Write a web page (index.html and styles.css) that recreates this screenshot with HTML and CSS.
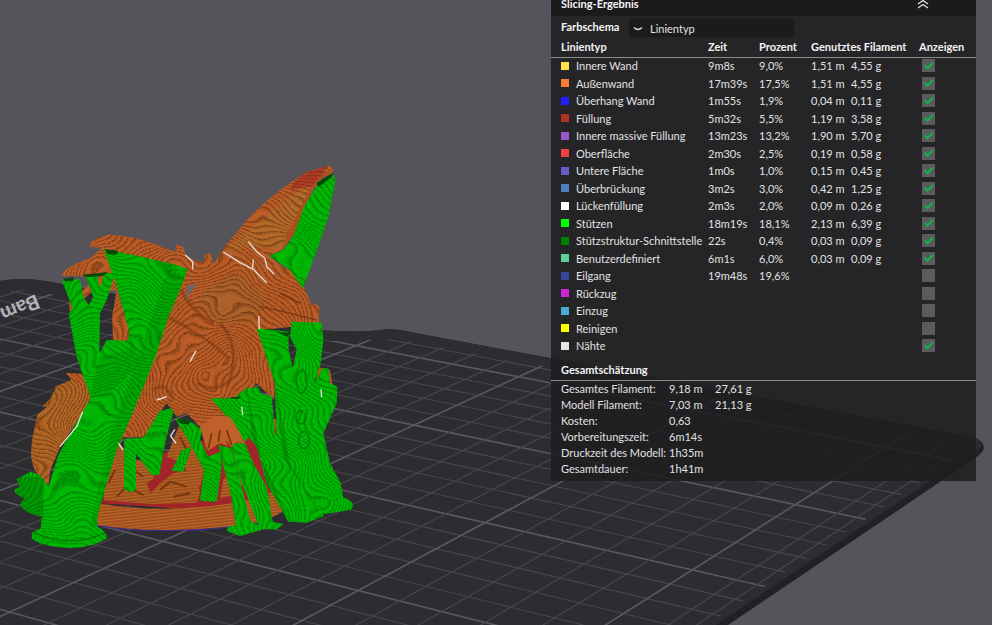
FILE: index.html
```
<!DOCTYPE html>
<html lang="de">
<head>
    <meta charset="UTF-8">
    <meta name="viewport" content="width=device-width, initial-scale=1.0">
    <title>Slicing-Ergebnis</title>
    <link rel="stylesheet" href="styles.css">
</head>
<body>
    <svg class="scene" viewBox="0 0 992 625" preserveAspectRatio="xMinYMin slice" aria-hidden="true">
        <defs>
            <!-- layer line textures -->
            <radialGradient id="rings-orange" gradientUnits="userSpaceOnUse" cx="640" cy="670" r="15" spreadMethod="repeat">
                <stop offset="0" stop-color="#5e2a08" stop-opacity="0"/>
                <stop offset=".5" stop-color="#5e2a08" stop-opacity=".15"/>
                <stop offset=".8" stop-color="#5e2a08" stop-opacity=".65"/>
                <stop offset="1" stop-color="#5e2a08" stop-opacity="0"/>
            </radialGradient>
            <linearGradient id="lines-orange" gradientUnits="userSpaceOnUse" x1="0" y1="0" x2="1" y2="9" spreadMethod="repeat">
                <stop offset="0" stop-color="#6d330c" stop-opacity="0"/>
                <stop offset=".6" stop-color="#6d330c" stop-opacity=".5"/>
                <stop offset="1" stop-color="#6d330c" stop-opacity="0"/>
            </linearGradient>
            <radialGradient id="rings-green" gradientUnits="userSpaceOnUse" cx="230" cy="1250" r="15" spreadMethod="repeat">
                <stop offset="0" stop-color="#005a00" stop-opacity="0"/>
                <stop offset=".5" stop-color="#005a00" stop-opacity=".1"/>
                <stop offset=".8" stop-color="#005a00" stop-opacity=".55"/>
                <stop offset="1" stop-color="#005a00" stop-opacity="0"/>
            </radialGradient>
            <filter id="warp" x="0" y="0" width="1" height="1" color-interpolation-filters="sRGB">
                <feTurbulence type="fractalNoise" baseFrequency=".009" numOctaves="1" seed="4" result="n"/>
                <feDisplacementMap in="SourceGraphic" in2="n" scale="190" xChannelSelector="R" yChannelSelector="G"/>
            </filter>
            <clipPath id="plate-clip">
                <path d="M0 293 L20 289 L330 341 L400 339 L970 446 L966 452 L716 619 L700 625 L0 625Z"/>
            </clipPath>
            <clipPath id="dragon-clip">
                <use href="#dragon"/>
            </clipPath>
            <clipPath id="support-clip">
                <use href="#supports"/>
            </clipPath>
            <path id="stones" d="M310 1050 315 980 335 920 350 860 372 900 375 930 420 930 450 955 462 985 440 1000 452 1030 480 1000 520 970 555 962 590 985 600 1030 590 1058 450 1062Z M500 920 540 820 600 850 580 890 612 960 600 1010 570 985 550 940Z M670 990 700 950 730 985 720 1030 660 1045Z M810 810 838 805 842 860Z M950 650 990 660 1000 720 950 740Z"/>
            <path id="dragon" d="M985 47Q1002 52 998 70L968 82 940 118 912 170 882 250 850 296 808 318 840 345 870 362Q895 380 905 400L925 440 935 470 945 458 958 470 956 524 900 528 780 540 790 590 830 700 820 748 770 700 730 738 640 748 690 800Q725 840 735 880L695 890 655 880 620 900 600 830 560 790 530 800 500 760 470 800Q475 840 425 862L370 862 350 900 300 1000 240 800 180 890 150 960 145 1008 110 970Q85 930 98 860L112 795 142 770 128 768Q150 755 168 715L162 712 215 690 198 668 250 672 340 578 336 500 350 420 270 430 210 485 206 460 240 425 300 380 186 377Q190 352 270 325L306 293 268 290Q266 268 325 254Q400 255 480 288L525 305 530 283 550 292 556 312 585 334 612 335 612 314 630 310 642 342 660 310Q740 205 790 162Q840 115 920 66Z"/>
            <path id="supports" d="M1000 72 1006 92 985 200 960 275 925 370 908 415 870 360 808 318 850 300 882 255 912 170 955 100Z
                M312 298 340 302 430 322 530 345 562 358 548 400 505 500 470 610 430 710 380 830 350 900 320 1000 292 1100 292 1130Q322 1145 320 1165Q280 1194 210 1194Q120 1190 95 1165L96 1148 122 1135 125 1100Q60 1085 62 1060L75 1045Q38 1030 45 1018L60 1010 50 988 92 965 120 975 146 1010 175 915 245 790 272 745 230 620 206 490 218 475 186 392 240 388 250 440 266 466 280 440 258 380 290 374 300 415 314 370 345 368 320 450 300 490 298 610 320 570 384 572 388 545 348 400 330 350Z
                M372 868 432 862 480 782 512 775 520 785 495 880 478 975 455 975 408 910 408 1020 390 1026 372 1018Z
                M525 805 570 812 605 840 600 870 625 920 660 905 665 950 650 1055 600 1052 612 960 570 880Z
                M545 900 575 890 550 965 515 962Z
                M632 745 700 745 740 715 745 865 735 875 690 810Z
                M740 715 775 712 785 732 815 738 825 850 860 900 960 1060 972 1098 920 1118 865 1115 800 1000 770 890 745 860Z
                M690 880 735 880 760 940 800 1010 818 1115 850 1122 830 1138 780 1138 750 1060 715 970Z
                M655 885 692 895 720 990 750 1110 790 1138 720 1158 680 1142 685 1130 708 1125 690 1020 665 930Z
                M770 535 865 545 866 600 878 655 890 600 870 560 875 515 965 518 970 570 962 640 940 705 968 655 985 655 990 700 1012 710 1010 760 970 850 990 940 1022 1000 1030 1042Q1075 1060 1050 1080L975 1092 930 1060 870 950 830 860 825 700Z"/>
        </defs>

        <rect width="992" height="625" fill="#55545b"/>

        <!-- build plate -->
        <path d="M0 281 Q22 277 45 281 L300 328 Q350 334 380 330 Q396 328 410 332 L972 437 Q984 440 984 448 Q983 453 974 459 L728 625 L0 625Z" fill="#212024"/>
        <path d="M0 281 Q22 277 45 281 L300 328 Q350 334 380 330 Q396 328 410 332 L972 437 Q983 440 981 447 L720 622 L716 625 L0 625Z" fill="#2d2c31"/>
        <g id="grid" clip-path="url(#plate-clip)"></g>
        <text class="plate-text" transform="translate(36 294) rotate(158)">Bam</text>

        <!-- printed model, drawn at three times its size -->
        <g transform="translate(0 150) scale(.33333)">
            <path d="M300 1060 390 980 450 920 850 800 878 960 830 1060 600 1080Z" fill="#a12428"/>
            <path d="M296 1060 Q440 1085 590 1072 Q760 1060 850 1010 L850 1082 Q800 1118 700 1130 Q460 1156 288 1126Z" fill="#bd642a"/>
            <path d="M288 1126 Q460 1156 700 1130" fill="none" stroke="#3c2a90" stroke-width="4"/>
            <path d="M296 1060 Q440 1085 590 1072 Q760 1060 850 1010 L850 1082 Q800 1118 700 1130 Q460 1156 288 1126Z" fill="url(#lines-orange)"/>
            <use href="#stones" fill="#b86428"/>
            <use href="#stones" fill="url(#lines-orange)"/>
            <path d="M325 1000 345 960 M350 1040 380 1010 430 1035 M480 1020 510 995 560 1010 M520 1040 570 1030 M540 860 560 900 M400 960 430 980" fill="none" stroke="#74360e" stroke-width="6"/>

            <use href="#dragon" fill="#c0602a"/>
            <g clip-path="url(#dragon-clip)">
                <path d="M660 310 985 47 1000 90 850 300 760 290Z" fill="#b96e2c"/>
                <path d="M880 98 920 66 985 47 940 110 870 118Z" fill="#b83c2c"/>
                <path d="M92 925 112 795 200 670 270 740 180 900 145 1008Z" fill="#b56a28"/>
                <path d="M580 470 Q620 380 720 370 L800 450 760 520 660 520Z" fill="#b2642b"/>
                <g filter="url(#warp)">
                    <rect x="40" y="-60" width="1100" height="1300" fill="url(#rings-orange)"/>
                </g>
                <path d="M850 300 Q900 190 940 118 Q960 85 998 62" fill="none" stroke="#a9501e" stroke-width="16"/>
                <path d="M660 520 Q720 580 690 690 Q650 730 590 700 M500 500 Q620 560 680 620 M460 720 Q500 690 520 750 M545 420 Q560 470 640 520" fill="none" stroke="#70340f" stroke-opacity=".45" stroke-width="9"/>
                <path d="M780 470 830 480 950 510 M840 430 900 460" fill="none" stroke="#6b300e" stroke-opacity=".7" stroke-width="5"/>
            </g>
            <!-- gap under the left wing -->
            <path d="M562 408 592 400 568 432 558 455Z" fill="#66656a"/>

            <use href="#supports" fill="#00bc05"/>
            <g clip-path="url(#support-clip)">
                <path d="M345 380 388 545 420 640 320 740 270 740 300 620 390 600Z" fill="#009a04" fill-opacity=".5"/>
                <path d="M505 360 562 358 430 710 290 1130 270 1130 330 860Z" fill="#008c04" fill-opacity=".35"/>
                <path d="M740 715 755 860 870 1115 800 1000Z M825 700 870 940 960 1092 850 920Z M655 885 700 1120 690 1130Z M40 980 130 980 130 1110 60 1100Z" fill="#007a04" fill-opacity=".5"/>
                <g filter="url(#warp)">
                    <rect x="-30" y="-60" width="1160" height="1320" fill="url(#rings-green)"/>
                </g>
                <g fill="none" stroke="#006400" stroke-opacity=".7" stroke-width="4">
                    <ellipse cx="902" cy="802" rx="14" ry="20"/>
                    <ellipse cx="912" cy="870" rx="16" ry="26"/>
                    <ellipse cx="905" cy="695" rx="16" ry="34"/>
                    <path d="M100 1146 Q205 1200 316 1148"/>
                </g>
            </g>
            <path d="M315 298 355 302 350 314 322 312Z M190 386 222 382 218 394 195 394Z M246 374 324 366 310 378 260 382Z M828 545 872 548 862 560Z M530 806 575 812 565 824 540 820Z M950 98 1000 68 996 80 955 112Z M690 744 722 738 716 748Z" fill="#044a06"/>
            <path id="claw" d="M600 830 640 800 690 800 715 840 735 882 712 870 695 892 680 872 655 882 625 902 612 870Z" fill="#bf6028"/>
            <path d="M625 895 635 850 M655 875 660 840 M695 885 680 840" fill="none" stroke="#74360e" stroke-width="5"/>

            <!-- seams -->
            <g fill="none" stroke="#e6ddd8" stroke-width="4" stroke-linejoin="round">
                <path d="M745 275 770 305 795 325 800 350 822 372"/>
                <path d="M670 306 720 338 760 358 800 398"/>
                <path d="M556 315 578 335 578 358 M760 328 758 355"/>
                <path d="M776 498 778 538"/>
                <path d="M248 785 230 830 180 890"/>
                <path d="M588 602 570 635"/>
                <path d="M524 838 512 858 528 880 M355 880 370 900 M470 750 500 740"/>
                <path d="M963 718 965 742 M725 770 728 795"/>
            </g>
        </g>
    </svg>

    <main class="overlay">
        <section class="panel">
            <header class="panel-header">
                <h1>Slicing-Ergebnis</h1>
                <button type="button" class="collapse" aria-label="Einklappen">
                    <svg viewBox="0 0 12 10" width="12" height="10"><path d="M1 4 6 .500 11 4M1 8 6 4.500 11 8" fill="none" stroke="#e4e4e4" stroke-width="1.300"/></svg>
                </button>
            </header>

            <div class="scheme">
                <label for="scheme">Farbschema</label>
                <div class="select">
                    <svg viewBox="0 0 10 6" width="10" height="6"><path d="M1 1.500Q5 5.500 9 1.500" fill="none" stroke="#dcdcdc" stroke-width="1.200"/></svg>
                    <select id="scheme">
                        <option>Linientyp</option>
                    </select>
                </div>
            </div>

            <table class="types">
                <thead>
                    <tr>
                        <th class="col-type">Linientyp</th>
                        <th class="col-time">Zeit</th>
                        <th class="col-percent">Prozent</th>
                        <th class="col-filament">Genutztes Filament</th>
                        <th>Anzeigen</th>
                    </tr>
                </thead>
                <tbody id="type-rows"></tbody>
            </table>

            <h2>Gesamtschätzung</h2>
            <table class="totals">
                <tr><th>Gesamtes Filament:</th><td>9,18 m</td><td>27,61 g</td></tr>
                <tr><th>Modell Filament:</th><td>7,03 m</td><td>21,13 g</td></tr>
                <tr><th>Kosten:</th><td>0,63</td><td></td></tr>
                <tr><th>Vorbereitungszeit:</th><td>6m14s</td><td></td></tr>
                <tr><th>Druckzeit des Modell:</th><td>1h35m</td><td></td></tr>
                <tr><th>Gesamtdauer:</th><td>1h41m</td><td></td></tr>
            </table>
        </section>
    </main>

    <script src="script.js"></script>
</body>
</html>
```
FILE: styles.css
```
* {
    box-sizing: border-box;
}
body {
    margin: 0;
    min-height: 100vh;
    overflow: hidden;
    background: #55545b;
    color: #e2e2e2;
    font-family: Lato, "Liberation Sans", sans-serif;
    font-size: 11px;
}
.scene {
    position: absolute;
    inset: 0;
    width: 100%;
    height: 100%;
}
.plate-text {
    fill: #b4b4b8;
    font-size: 20px;
    font-weight: bold;
}
.overlay {
    position: relative;
    display: flex;
    justify-content: flex-end;
    padding-right: 16px;
}
.panel {
    width: 425px;
    padding-bottom: 4px;
    background: rgba(29, 29, 30, 0.86);
}
.panel-header {
    display: flex;
    justify-content: space-between;
    height: 16px;
    padding: 0 47px 0 10px;
    background: #1b1b1c;
}
h1,
h2 {
    margin: 0;
    font-size: 11px;
    font-weight: bold;
    color: #f4f4f4;
}
h1 {
    line-height: 8px;
}
.collapse {
    display: flex;
    height: 10px;
    padding: 0;
    border: none;
    background: none;
    cursor: pointer;
}
.scheme {
    display: flex;
    align-items: flex-start;
    height: 21px;
    padding: 3px 0 0 10px;
}
.scheme label {
    width: 68px;
    line-height: 16px;
    font-weight: bold;
    color: #f4f4f4;
}
.select {
    position: relative;
    width: 165px;
}
.select svg {
    position: absolute;
    left: 4px;
    top: 7px;
    pointer-events: none;
}
select {
    display: block;
    width: 100%;
    height: 18px;
    padding: 0 0 0 21px;
    border: none;
    border-radius: 3px;
    appearance: none;
    background: #1b1b1c;
    color: #e2e2e2;
    font: inherit;
}
table {
    width: 100%;
    table-layout: fixed;
    border-collapse: collapse;
}
th,
td {
    padding: 0;
    text-align: left;
    white-space: nowrap;
}
.types thead th {
    height: 20px;
    border-bottom: 1px solid #8c8c8c;
    color: #f4f4f4;
}
.types th:first-child,
.types td:first-child {
    padding-left: 10px;
}
.col-type {
    width: 157px;
}
.col-time {
    width: 51px;
}
.col-percent {
    width: 52px;
}
.col-filament {
    width: 108px;
}
.types tbody tr {
    height: 17px;
}
.types tbody tr:nth-child(even) {
    height: 18px;
}
.types label {
    display: flex;
    align-items: center;
    gap: 7px;
}
.swatch {
    width: 8px;
    height: 8px;
}
.length {
    display: inline-block;
    width: 40px;
}
input[type="checkbox"] {
    display: block;
    width: 13px;
    height: 13px;
    margin: 0 0 0 3px;
    appearance: none;
    background: #5b5b5b;
}
input[type="checkbox"]:checked::after {
    content: "";
    display: block;
    width: 13px;
    height: 13px;
    background: #12b050;
    clip-path: polygon(14% 52%, 26% 42%, 42% 58%, 78% 22%, 90% 32%, 42% 82%);
}
h2 {
    height: 20px;
    margin-top: 7px;
    padding-left: 10px;
    border-bottom: 1px solid #8c8c8c;
    line-height: 18px;
}
.totals tr {
    height: 16px;
    vertical-align: top;
    line-height: 15px;
}
.totals th {
    width: 118px;
    padding-left: 10px;
    font-weight: normal;
}
.totals td:nth-child(2) {
    width: 46px;
}
```
FILE: script.js
```
const types = [
    { name: 'Innere Wand', color: '#ffe34a', time: '9m8s', percent: '9,0%', length: '1,51 m', weight: '4,55 g', shown: true },
    { name: 'Außenwand', color: '#fb7a35', time: '17m39s', percent: '17,5%', length: '1,51 m', weight: '4,55 g', shown: true },
    { name: 'Überhang Wand', color: '#1f1fff', time: '1m55s', percent: '1,9%', length: '0,04 m', weight: '0,11 g', shown: true },
    { name: 'Füllung', color: '#b0302a', time: '5m32s', percent: '5,5%', length: '1,19 m', weight: '3,58 g', shown: true },
    { name: 'Innere massive Füllung', color: '#9a54cc', time: '13m23s', percent: '13,2%', length: '1,90 m', weight: '5,70 g', shown: true },
    { name: 'Oberfläche', color: '#f04040', time: '2m30s', percent: '2,5%', length: '0,19 m', weight: '0,58 g', shown: true },
    { name: 'Untere Fläche', color: '#665cc7', time: '1m0s', percent: '1,0%', length: '0,15 m', weight: '0,45 g', shown: true },
    { name: 'Überbrückung', color: '#4d80ba', time: '3m2s', percent: '3,0%', length: '0,42 m', weight: '1,25 g', shown: true },
    { name: 'Lückenfüllung', color: '#ffffff', time: '2m3s', percent: '2,0%', length: '0,09 m', weight: '0,26 g', shown: true },
    { name: 'Stützen', color: '#00ff00', time: '18m19s', percent: '18,1%', length: '2,13 m', weight: '6,39 g', shown: true },
    { name: 'Stützstruktur-Schnittstelle', color: '#008000', time: '22s', percent: '0,4%', length: '0,03 m', weight: '0,09 g', shown: true },
    { name: 'Benutzerdefiniert', color: '#5ed194', time: '6m1s', percent: '6,0%', length: '0,03 m', weight: '0,09 g', shown: true },
    { name: 'Eilgang', color: '#38489b', time: '19m48s', percent: '19,6%' },
    { name: 'Rückzug', color: '#cd22d6' },
    { name: 'Einzug', color: '#49add0' },
    { name: 'Reinigen', color: '#ffff00' },
    { name: 'Nähte', color: '#e6e6e6', shown: true }
];

document.getElementById('type-rows').innerHTML = types.map((t, i) => `
    <tr>
        <td><label for="type-${i}"><span class="swatch" style="background:${t.color}"></span>${t.name}</label></td>
        <td>${t.time || ''}</td>
        <td>${t.percent || ''}</td>
        <td>${t.length ? `<span class="length">${t.length}</span>${t.weight}` : ''}</td>
        <td><input type="checkbox" id="type-${i}" ${t.shown ? 'checked' : ''}></td>
    </tr>`).join('');

// Plate grid in perspective: both line families run to a point on the horizon
const horizon = -440;
const left = { x: -3740, y: horizon };
const right = { x: 2285, y: horizon };
let lines = '';

function addLine(from, x, y, major) {
    const ex = x + (x - from.x);
    const ey = y + (y - from.y);
    lines += `<line x1="${from.x}" y1="${from.y}" x2="${ex}" y2="${ey}" stroke="${major ? '#5a595f' : '#48474c'}" stroke-width="${major ? 1.6 : 1.1}"/>`;
}

for (let k = -4; k < 22; k++) {
    const y = 1 / (0.0010718 - 0.00001367 * k) + horizon;
    addLine(left, 910 - (y - 482) / 0.667, y, (k + 4) % 5 === 1);
}
addLine(right, 910, 482, false);
for (let k = 0; k < 30; k++) {
    addLine(right, 885 - k * 54, 482, k % 5 === 1);
}
document.getElementById('grid').innerHTML = lines;
```
